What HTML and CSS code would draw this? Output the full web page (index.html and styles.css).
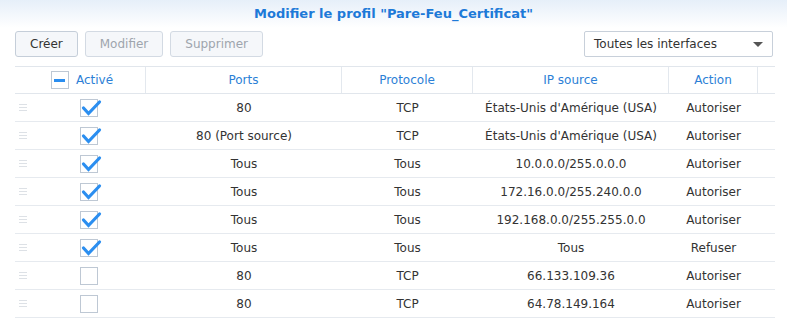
FILE: index.html
```html
<!DOCTYPE html>
<html>
<head>
  <title>Modifier le profil</title>
  <link rel="stylesheet" href="styles.css">
</head>
<body>

<div class="window">
  <div class="title-bar">Modifier le profil "Pare-Feu_Certificat"</div>

  <div class="toolbar">
    <button class="btn">Créer</button>
    <button class="btn disabled">Modifier</button>
    <button class="btn disabled">Supprimer</button>
    <div class="spacer"></div>
    <div class="select">
      <span>Toutes les interfaces</span>
      <span class="arrow"></span>
    </div>
  </div>

  <div class="grid">
    <div class="row head">
      <div class="cell first">
        <span class="check partial"></span>
        <span>Activé</span>
      </div>
      <div class="cell">Ports</div>
      <div class="cell">Protocole</div>
      <div class="cell">IP source</div>
      <div class="cell">Action</div>
      <div class="cell last"></div>
    </div>

    <div id="rows"></div>
  </div>
</div>

<script>
  var rules = [
    { on: true, ports: "80", proto: "TCP", ip: "États-Unis d'Amérique (USA)", action: "Autoriser" },
    { on: true, ports: "80 (Port source)", proto: "TCP", ip: "États-Unis d'Amérique (USA)", action: "Autoriser" },
    { on: true, ports: "Tous", proto: "Tous", ip: "10.0.0.0/255.0.0.0", action: "Autoriser" },
    { on: true, ports: "Tous", proto: "Tous", ip: "172.16.0.0/255.240.0.0", action: "Autoriser" },
    { on: true, ports: "Tous", proto: "Tous", ip: "192.168.0.0/255.255.0.0", action: "Autoriser" },
    { on: true, ports: "Tous", proto: "Tous", ip: "Tous", action: "Refuser" },
    { on: false, ports: "80", proto: "TCP", ip: "66.133.109.36", action: "Autoriser" },
    { on: false, ports: "80", proto: "TCP", ip: "64.78.149.164", action: "Autoriser" }
  ];

  var tick = '<svg width="22" height="18" viewBox="0 0 22 18"><path d="M3.5 9 L8.5 14.5 L19.5 3" fill="none" stroke="#2b8ef0" stroke-width="3.2" stroke-linecap="round" stroke-linejoin="miter"/></svg>';

  var html = "";
  rules.forEach(function (r) {
    html += '<div class="row">' +
      '<div class="cell first"><span class="handle"></span>' +
      '<span class="check">' + (r.on ? tick : "") + '</span></div>' +
      '<div class="cell">' + r.ports + '</div>' +
      '<div class="cell">' + r.proto + '</div>' +
      '<div class="cell">' + r.ip + '</div>' +
      '<div class="cell">' + r.action + '</div>' +
      '<div class="cell last"></div>' +
      '</div>';
  });
  document.getElementById("rows").innerHTML = html;
</script>

</body>
</html>
```

FILE: styles.css
```css
body {
  margin: 0;
  font-family: "DejaVu Sans", Verdana, sans-serif;
  font-size: 12px;
  color: #333;
  background-color: #fff;
}

.window {
  width: 787px;
  height: 329px;
  overflow: hidden;
}

.title-bar {
  height: 28px;
  line-height: 28px;
  text-align: center;
  font-weight: bold;
  font-size: 13px;
  color: #1d7ad8;
  background: linear-gradient(#e6eff9, #ffffff);
}

.toolbar {
  display: flex;
  align-items: center;
  gap: 7px;
  padding: 3px 14px 0 15px;
  height: 26px;
}

.spacer {
  flex: 1;
}

.btn {
  height: 26px;
  margin: 0;
  padding: 0 14px;
  font-family: inherit;
  font-size: 12px;
  color: #333;
  background-color: #f5f7fa;
  border: 1px solid #c5ced9;
  border-radius: 3px;
}

.btn.disabled {
  color: #9ea5ad;
  border-color: #d3dae3;
}

.select {
  height: 24px;
  width: 169px;
  border: 1px solid #c8d0da;
  border-radius: 2px;
  display: flex;
  align-items: center;
  justify-content: space-between;
  padding: 0 9px;
}

.arrow {
  width: 0;
  height: 0;
  border-left: 5px solid transparent;
  border-right: 5px solid transparent;
  border-top: 5px solid #555;
}

.grid {
  margin: 9px 12px 0 15px;
}

.row {
  display: grid;
  grid-template-columns: 131px 196px 131px 196px 89px 17px;
  height: 28px;
  border-bottom: 1px solid #e6eaef;
  box-sizing: border-box;
}

.row.head {
  border-top: 1px solid #e1e6ec;
  border-bottom: 1px solid #e1e6ec;
  color: #2c7fd6;
}

.cell {
  display: flex;
  align-items: center;
  justify-content: center;
  white-space: nowrap;
}

.head .cell {
  border-right: 1px solid #e3e8ee;
}

.head .cell.last {
  border-right: none;
}

.row .first {
  justify-content: flex-start;
  padding-left: 4px;
}

.head .first {
  justify-content: center;
  gap: 7px;
  padding-left: 4px;
}

.handle {
  width: 8px;
  height: 5px;
  border-top: 1px solid #dde1e6;
  border-bottom: 1px solid #dde1e6;
  position: relative;
}

.handle::after {
  content: "";
  position: absolute;
  left: 0;
  right: 0;
  top: 2px;
  border-top: 1px solid #dde1e6;
}

.check {
  width: 16px;
  height: 16px;
  border: 1px solid #bec8d4;
  background-color: #fff;
  position: relative;
  display: flex;
  align-items: center;
  justify-content: center;
}

.row .check {
  margin-left: 53px;
}

.head .check {
  margin-left: 0;
}

.check svg {
  position: absolute;
  left: -1px;
  top: -1px;
}

.check.partial::after {
  content: "";
  width: 11px;
  height: 3px;
  background-color: #2b8ef0;
}
```
